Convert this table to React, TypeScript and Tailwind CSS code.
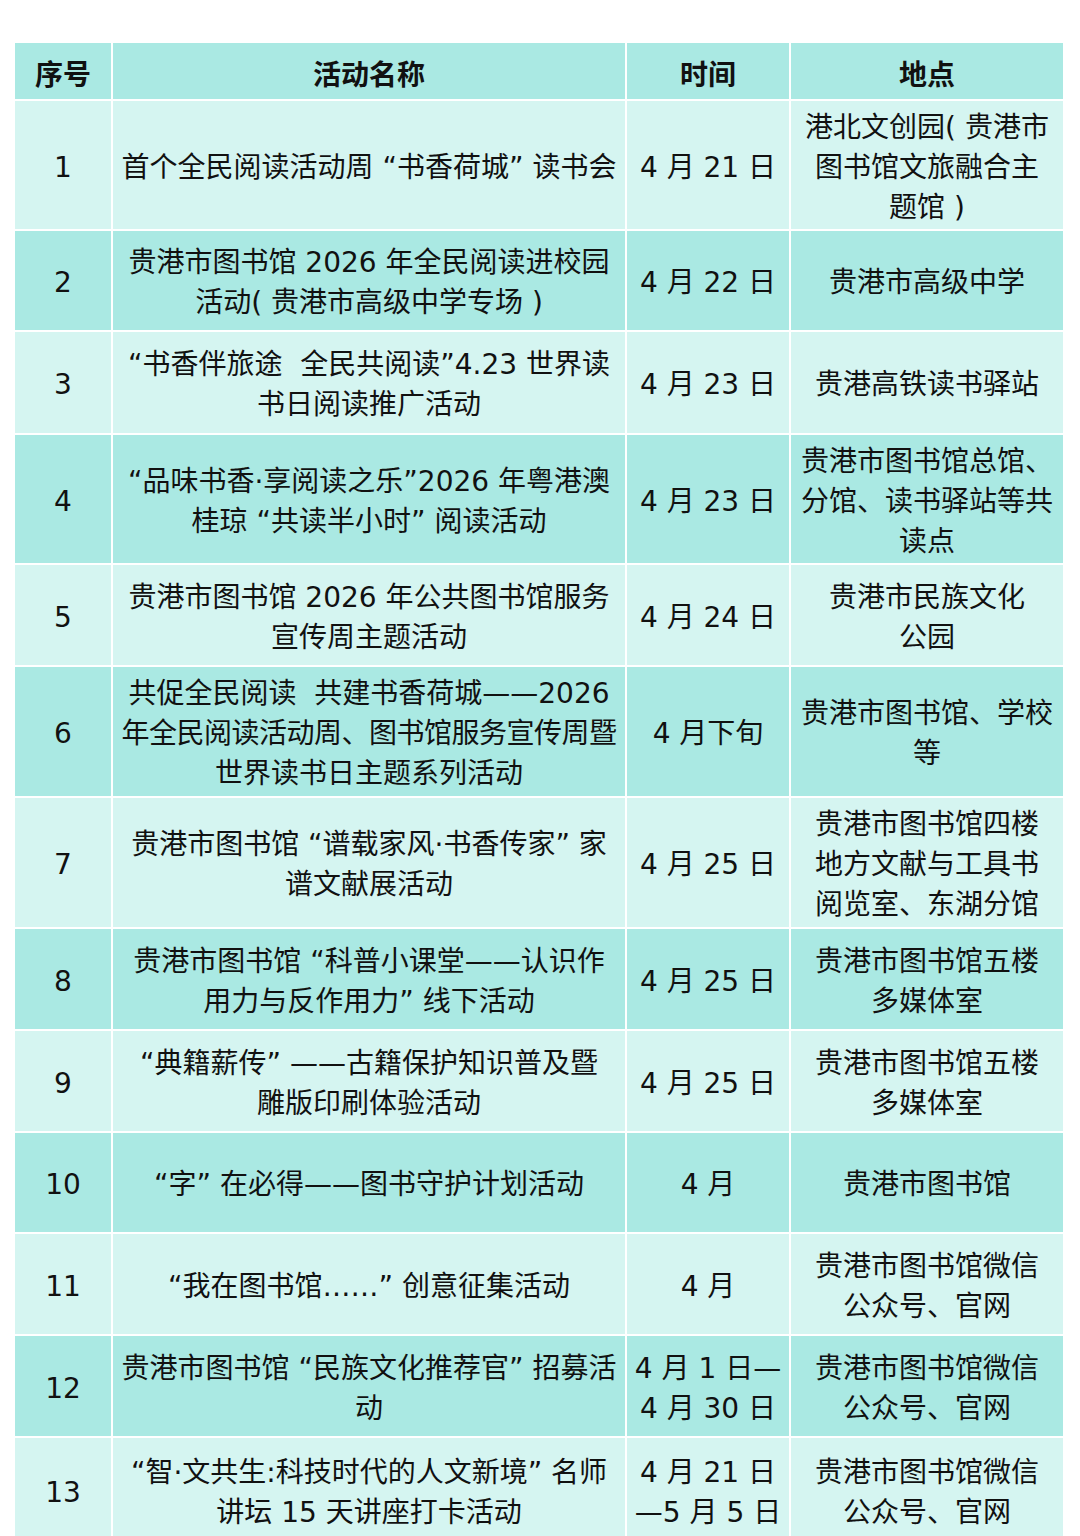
import React from "react";

type Line = React.ReactNode;

type Row = {
  no: string;
  name: Line[];
  time: Line[];
  place: Line[];
  h: string;
  dark: boolean;
};

const rows: Row[] = [
  {
    no: "1",
    name: ["首个全民阅读活动周 “书香荷城” 读书会"],
    time: ["4 月 21 日"],
    place: ["港北文创园( 贵港市", "图书馆文旅融合主", "题馆 )"],
    h: "h-[128px]",
    dark: false,
  },
  {
    no: "2",
    name: ["贵港市图书馆 2026 年全民阅读进校园", "活动( 贵港市高级中学专场 )"],
    time: ["4 月 22 日"],
    place: ["贵港市高级中学"],
    h: "h-[99px]",
    dark: true,
  },
  {
    no: "3",
    name: ["“书香伴旅途  全民共阅读”4.23 世界读", "书日阅读推广活动"],
    time: ["4 月 23 日"],
    place: ["贵港高铁读书驿站"],
    h: "h-[101px]",
    dark: false,
  },
  {
    no: "4",
    name: ["“品味书香·享阅读之乐”2026 年粤港澳", "桂琼 “共读半小时” 阅读活动"],
    time: ["4 月 23 日"],
    place: ["贵港市图书馆总馆、", "分馆、读书驿站等共", "读点"],
    h: "h-[128px]",
    dark: true,
  },
  {
    no: "5",
    name: ["贵港市图书馆 2026 年公共图书馆服务", "宣传周主题活动"],
    time: ["4 月 24 日"],
    place: ["贵港市民族文化", "公园"],
    h: "h-[100px]",
    dark: false,
  },
  {
    no: "6",
    name: [
      "共促全民阅读  共建书香荷城——2026",
      <span className="tracking-[-0.5px]">年全民阅读活动周、图书馆服务宣传周暨</span>,
      "世界读书日主题系列活动",
    ],
    time: ["4 月下旬"],
    place: ["贵港市图书馆、学校", "等"],
    h: "h-[129px]",
    dark: true,
  },
  {
    no: "7",
    name: ["贵港市图书馆 “谱载家风·书香传家” 家", "谱文献展活动"],
    time: ["4 月 25 日"],
    place: ["贵港市图书馆四楼", "地方文献与工具书", "阅览室、东湖分馆"],
    h: "h-[129px]",
    dark: false,
  },
  {
    no: "8",
    name: ["贵港市图书馆 “科普小课堂——认识作", "用力与反作用力” 线下活动"],
    time: ["4 月 25 日"],
    place: ["贵港市图书馆五楼", "多媒体室"],
    h: "h-[100px]",
    dark: true,
  },
  {
    no: "9",
    name: ["“典籍薪传” ——古籍保护知识普及暨", "雕版印刷体验活动"],
    time: ["4 月 25 日"],
    place: ["贵港市图书馆五楼", "多媒体室"],
    h: "h-[100px]",
    dark: false,
  },
  {
    no: "10",
    name: ["“字” 在必得——图书守护计划活动"],
    time: ["4 月"],
    place: ["贵港市图书馆"],
    h: "h-[99px]",
    dark: true,
  },
  {
    no: "11",
    name: ["“我在图书馆……” 创意征集活动"],
    time: ["4 月"],
    place: ["贵港市图书馆微信", "公众号、官网"],
    h: "h-[100px]",
    dark: false,
  },
  {
    no: "12",
    name: ["贵港市图书馆 “民族文化推荐官” 招募活", "动"],
    time: ["4 月 1 日—", "4 月 30 日"],
    place: ["贵港市图书馆微信", "公众号、官网"],
    h: "h-[100px]",
    dark: true,
  },
  {
    no: "13",
    name: ["“智·文共生:科技时代的人文新境” 名师", "讲坛 15 天讲座打卡活动"],
    time: ["4 月 21 日", "—5 月 5 日"],
    place: ["贵港市图书馆微信", "公众号、官网"],
    h: "h-[104px]",
    dark: false,
  },
];

function Cell({ lines, dark }: { lines: Line[]; dark: boolean }) {
  return (
    <div
      className={
        "flex flex-col items-center justify-center text-center pt-[5px] " +
        (dark ? "bg-[#aae9e3]" : "bg-[#d5f5f1]")
      }
    >
      {lines.map((l, i) => (
        <div key={i} className="whitespace-pre leading-[40px]">
          {l}
        </div>
      ))}
    </div>
  );
}

export default function App() {
  return (
    <div
      className="min-h-screen bg-white pt-[43px] pl-[15px] text-[28px] text-[#111111]"
      style={{ fontFamily: '"DejaVu Sans", "Noto Sans CJK SC", sans-serif' }}
    >
      <div className="w-[1048px] flex flex-col gap-[2px]">
        <div className="grid grid-cols-[96px_512px_162px_272px] gap-x-[2px] h-[56px] font-bold">
          {["序号", "活动名称", "时间", "地点"].map((t) => (
            <div
              key={t}
              className="flex items-center justify-center bg-[#aae9e3] pt-[3px]"
              style={{ fontFamily: '"Noto Sans CJK SC", sans-serif' }}
            >
              {t}
            </div>
          ))}
        </div>
        {rows.map((r) => (
          <div
            key={r.no}
            className={"grid grid-cols-[96px_512px_162px_272px] gap-x-[2px] " + r.h}
          >
            <Cell lines={[r.no]} dark={r.dark} />
            <Cell lines={r.name} dark={r.dark} />
            <Cell lines={r.time} dark={r.dark} />
            <Cell lines={r.place} dark={r.dark} />
          </div>
        ))}
      </div>
    </div>
  );
}
